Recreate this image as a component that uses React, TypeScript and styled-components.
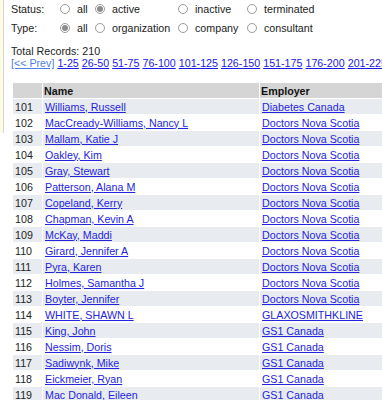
import React from "react";
import styled, { createGlobalStyle } from "styled-components";

const GlobalStyle = createGlobalStyle`
	html, body {
		margin: 0;
		padding: 0;
		background: #ffffff;
		overflow: hidden;
	}
	body {
		font-family: "Liberation Sans", Arial, sans-serif;
		font-size: 10.7px;
		color: #222;
	}
`;

const Page = styled.div`
	display: flex;
	align-items: flex-start;
	width: 382px;
	height: 400px;
	overflow: hidden;
`;

const SideStrip = styled.div`
	flex: 0 0 3px;
	height: 133px;
	background: #fdfbe2;
	border-right: 1px solid #d6d6d6;
`;

const Main = styled.div`
	flex: 1;
	min-width: 0;
	padding-left: 7px;
	margin-top: -1px;
	white-space: nowrap;
`;

const FilterRow = styled.div`
	display: grid;
	grid-template-columns: 49px 35px 83px 69px auto;
	align-items: center;
	height: 19px;
`;

const FilterLabel = styled.span`
	color: #222;
`;

const Option = styled.label`
	display: flex;
	align-items: center;
	gap: 7px;
	color: #222;
`;

const Radio = styled.span<{ $checked?: boolean }>`
	box-sizing: border-box;
	width: 10px;
	height: 10px;
	border-radius: 50%;
	border: 1px solid #9b9b9b;
	background: #fff;
	display: flex;
	align-items: center;
	justify-content: center;
	&::after {
		content: "";
		width: 6px;
		height: 6px;
		border-radius: 50%;
		background: ${(p) => (p.$checked ? "#8c8c8c" : "transparent")};
	}
`;

const Total = styled.div`
	margin-top: 8px;
	line-height: 12px;
`;

const Pager = styled.div`
	line-height: 13px;
	display: flex;
	gap: 3px;
`;

const PageLink = styled.a<{ $muted?: boolean }>`
	color: ${(p) => (p.$muted ? "#4f7fe0" : "#1a1ae6")};
	text-decoration: underline;
`;

const Grid = styled.table`
	margin-top: 12px;
	margin-left: 1px;
	border-collapse: separate;
	border-spacing: 1px;
	table-layout: fixed;
	width: 440px;
`;

const HeadCell = styled.th`
	background: #d5d5d5;
	height: 15px;
	padding: 0 1px;
	text-align: left;
	font-weight: bold;
	color: #111;
`;

const Cell = styled.td<{ $band?: boolean }>`
	background: ${(p) => (p.$band ? "#e8ecf1" : "#ffffff")};
	height: 15px;
	padding: 0 1px 0 2px;
	color: #222;
	overflow: hidden;
`;

const RowLink = styled.a`
	color: #2424e0;
	text-decoration: underline;
`;

type Person = [number, string, string];

const DNS = "Doctors Nova Scotia";
const GS1 = "GS1 Canada";

const people: Person[] = [
	[101, "Williams, Russell", "Diabetes Canada"],
	[102, "MacCready-Williams, Nancy L", DNS],
	[103, "Mallam, Katie J", DNS],
	[104, "Oakley, Kim", DNS],
	[105, "Gray, Stewart", DNS],
	[106, "Patterson, Alana M", DNS],
	[107, "Copeland, Kerry", DNS],
	[108, "Chapman, Kevin A", DNS],
	[109, "McKay, Maddi", DNS],
	[110, "Girard, Jennifer A", DNS],
	[111, "Pyra, Karen", DNS],
	[112, "Holmes, Samantha J", DNS],
	[113, "Boyter, Jennifer", DNS],
	[114, "WHITE, SHAWN L", "GLAXOSMITHKLINE"],
	[115, "King, John", GS1],
	[116, "Nessim, Doris", GS1],
	[117, "Sadiwynk, Mike", GS1],
	[118, "Eickmeier, Ryan", GS1],
	[119, "Mac Donald, Eileen", GS1],
];

const pages = ["1-25", "26-50", "51-75", "76-100", "101-125", "126-150", "151-175", "176-200", "201-225"];

const Choice = ({ text, checked }: { text: string; checked?: boolean }) => (
	<Option>
		<Radio $checked={checked} />
		{text}
	</Option>
);

const App = () => {
	return (
		<>
			<GlobalStyle />
			<Page>
				<SideStrip />
				<Main>
					<FilterRow>
						<FilterLabel>Status:</FilterLabel>
						<Choice text="all" />
						<Choice text="active" checked />
						<Choice text="inactive" />
						<Choice text="terminated" />
					</FilterRow>
					<FilterRow>
						<FilterLabel>Type:</FilterLabel>
						<Choice text="all" checked />
						<Choice text="organization" />
						<Choice text="company" />
						<Choice text="consultant" />
					</FilterRow>
					<Total>Total Records: 210</Total>
					<Pager>
						<PageLink $muted href="#">[&lt;&lt; Prev]</PageLink>
						{pages.map((p) => (
							<PageLink key={p} href="#">
								{p}
							</PageLink>
						))}
					</Pager>
					<Grid>
						<colgroup>
							<col style={{ width: 29 }} />
							<col style={{ width: 216 }} />
							<col />
						</colgroup>
						<thead>
							<tr>
								<HeadCell></HeadCell>
								<HeadCell>Name</HeadCell>
								<HeadCell>Employer</HeadCell>
							</tr>
						</thead>
						<tbody>
							{people.map(([id, name, employer]) => {
								const band = id % 2 === 1;
								return (
									<tr key={id}>
										<Cell $band={band}>{id}</Cell>
										<Cell $band={band}>
											<RowLink href="#">{name}</RowLink>
										</Cell>
										<Cell $band={band}>
											<RowLink href="#">{employer}</RowLink>
										</Cell>
									</tr>
								);
							})}
						</tbody>
					</Grid>
				</Main>
			</Page>
		</>
	);
};

export default App;
